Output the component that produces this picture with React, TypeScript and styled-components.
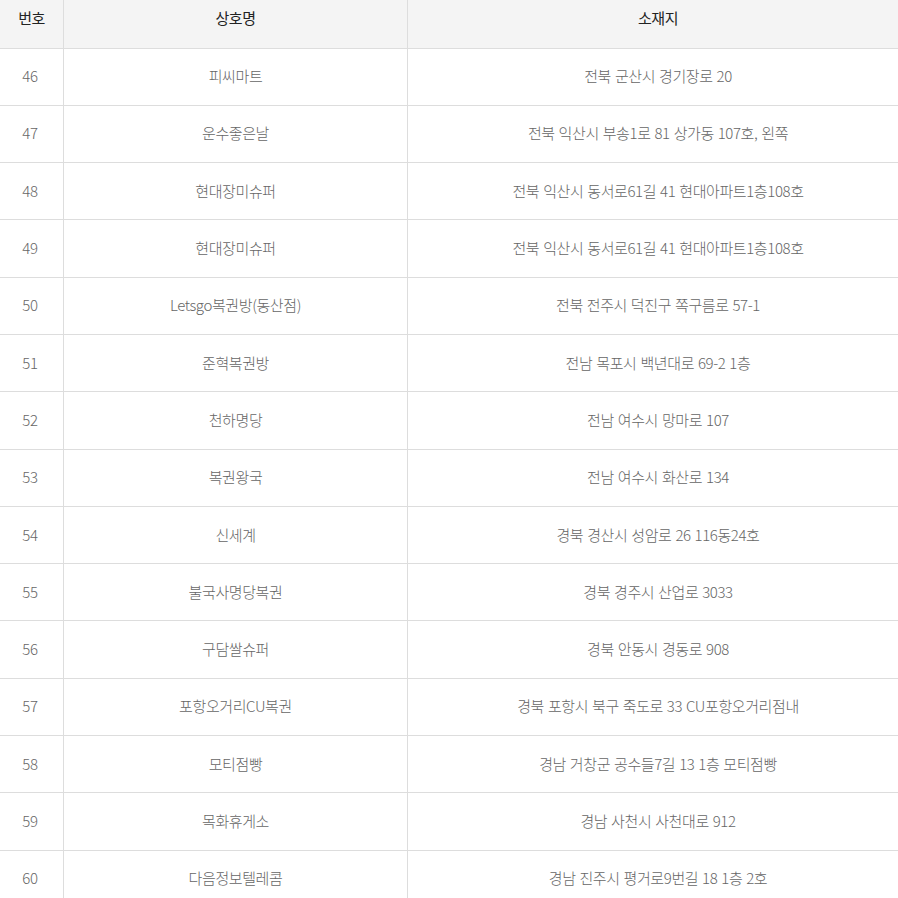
import styled, { createGlobalStyle } from "styled-components";

const GlobalStyle = createGlobalStyle`
  html, body {
    margin: 0;
    padding: 0;
    background: #fff;
    overflow: hidden;
  }
  body {
    font-family: "Noto Sans CJK KR", "Noto Sans", sans-serif;
  }
`;

const stores = [
  { no: 46, name: "피씨마트", addr: "전북 군산시 경기장로 20" },
  { no: 47, name: "운수좋은날", addr: "전북 익산시 부송1로 81 상가동 107호, 왼쪽" },
  { no: 48, name: "현대장미슈퍼", addr: "전북 익산시 동서로61길 41 현대아파트1층108호" },
  { no: 49, name: "현대장미슈퍼", addr: "전북 익산시 동서로61길 41 현대아파트1층108호" },
  { no: 50, name: "Letsgo복권방(동산점)", addr: "전북 전주시 덕진구 쪽구름로 57-1" },
  { no: 51, name: "준혁복권방", addr: "전남 목포시 백년대로 69-2 1층" },
  { no: 52, name: "천하명당", addr: "전남 여수시 망마로 107" },
  { no: 53, name: "복권왕국", addr: "전남 여수시 화산로 134" },
  { no: 54, name: "신세계", addr: "경북 경산시 성암로 26 116동24호" },
  { no: 55, name: "불국사명당복권", addr: "경북 경주시 산업로 3033" },
  { no: 56, name: "구담쌀슈퍼", addr: "경북 안동시 경동로 908" },
  { no: 57, name: "포항오거리CU복권", addr: "경북 포항시 북구 죽도로 33 CU포항오거리점내" },
  { no: 58, name: "모티점빵", addr: "경남 거창군 공수들7길 13 1층 모티점빵" },
  { no: 59, name: "목화휴게소", addr: "경남 사천시 사천대로 912" },
  { no: 60, name: "다음정보텔레콤", addr: "경남 진주시 평거로9번길 18 1층 2호" },
];

const Table = styled.table`
  width: 908px;
  border-collapse: collapse;
  table-layout: fixed;
`;

const HeadRow = styled.tr`
  height: 48px;
`;

const HeadCell = styled.th<{ $w?: number }>`
  width: ${(p) => (p.$w ? `${p.$w}px` : "auto")};
  padding: 0 0 12px;
  background: #f4f4f4;
  border-right: 1px solid #dddddd;
  border-bottom: 1px solid #dddddd;
  color: #222;
  font-size: 15px;
  font-weight: 400;
  letter-spacing: -0.5px;
  text-align: center;
  vertical-align: middle;

  &:last-child {
    border-right: none;
  }
`;

const Row = styled.tr`
  height: 57.3px;
`;

const Cell = styled.td`
  padding: 0 0 2px;
  border-right: 1px solid #dddddd;
  border-bottom: 1px solid #dddddd;
  color: #666;
  font-size: 15px;
  font-weight: 300;
  letter-spacing: -0.4px;
  word-spacing: 1px;
  text-align: center;
  vertical-align: middle;

  &:first-child {
    padding-right: 3px;
  }

  &:last-child {
    border-right: none;
  }
`;

export default function App() {
  return (
    <>
      <GlobalStyle />
      <Table>
        <thead>
          <HeadRow>
            <HeadCell $w={63}>번호</HeadCell>
            <HeadCell $w={343}>상호명</HeadCell>
            <HeadCell>소재지</HeadCell>
          </HeadRow>
        </thead>
        <tbody>
          {stores.map((s) => (
            <Row key={s.no}>
              <Cell>{s.no}</Cell>
              <Cell>{s.name}</Cell>
              <Cell>{s.addr}</Cell>
            </Row>
          ))}
        </tbody>
      </Table>
    </>
  );
}
